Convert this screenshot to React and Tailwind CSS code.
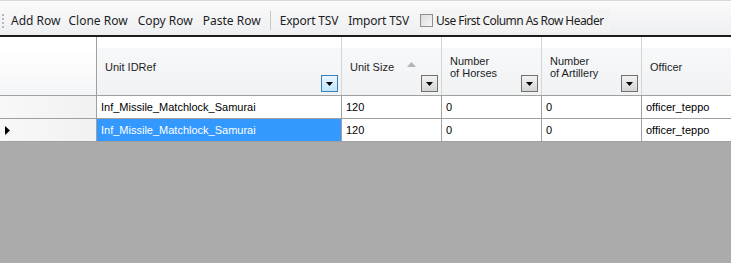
import React from "react";

const cols = [
  { key: "id", label: ["Unit IDRef"], w: "w-[245px]", active: true },
  { key: "size", label: ["Unit Size"], w: "w-[100px]", sort: true },
  { key: "horses", label: ["Number", "of Horses"], w: "w-[100px]" },
  { key: "art", label: ["Number", "of Artillery"], w: "w-[100px]" },
  { key: "officer", label: ["Officer"], w: "w-[120px]" },
];

const rows = [
  ["Inf_Missile_Matchlock_Samurai", "120", "0", "0", "officer_teppo"],
  ["Inf_Missile_Matchlock_Samurai", "120", "0", "0", "officer_teppo"],
];

function DropButton({ active }) {
  return (
    <div
      className={
        "absolute top-[38px] right-[3px] w-[17px] h-[17px] flex items-center justify-center border " +
        (active
          ? "border-[#3c7fb1] bg-gradient-to-b from-[#eaf6fd] to-[#bee6fd]"
          : "border-[#707070] bg-gradient-to-b from-[#f2f2f2] to-[#d5d5d5]")
      }
    >
      <svg width="7" height="4" viewBox="0 0 7 4">
        <path d="M0 0h7L3.5 4z" fill="#000" />
      </svg>
    </div>
  );
}

export default function App() {
  return (
    <div className="w-[731px] h-[263px] overflow-hidden bg-[#ababab] text-[11px] font-['Liberation_Sans',Arial,sans-serif]">
      {/* Toolbar */}
      <div className="h-[37px] bg-gradient-to-b from-[#fafafa] to-[#eeeff2] border-t border-[#d8d8d8] border-b-2 border-b-[#1c1c1c] flex items-center pt-[5px] pl-[2px] font-['Noto_Sans','Open_Sans',sans-serif] text-[12px] text-[#1e1e1e]">
        <div className="flex flex-col gap-[2px] mr-[4px]">
          {[0, 1, 2, 3].map((i) => (
            <div key={i} className="w-[2px] h-[2px] bg-[#b8b8b8]" />
          ))}
        </div>
        <span className="px-[3px]">Add Row</span>
        <span className="px-[5px]">Clone Row</span>
        <span className="px-[5px]">Copy Row</span>
        <span className="px-[5px]">Paste Row</span>
        <div className="w-px h-[19px] bg-[#c8c8c8] mx-[4px]" />
        <span className="px-[5px] tracking-[-0.2px]">Export TSV</span>
        <span className="px-[5px] tracking-[-0.2px]">Import TSV</span>
        <div className="flex items-center ml-[6px] pr-[6px] h-[22px] bg-[#f3f3f3]">
          <div className="w-[13px] h-[13px] border border-[#8e8f8f] bg-gradient-to-br from-[#dcdcdc] to-[#f6f6f6] mr-[3px]" />
          <span className="tracking-[-0.55px]">Use First Column As Row Header</span>
        </div>
      </div>

      {/* Grid */}
      <div className="bg-white">
        <div className="flex h-[59px] border-b border-[#a0a0a0] bg-white">
          <div className="w-[97px] shrink-0 border-r border-[#a0a0a0] bg-gradient-to-b from-white from-20% to-[#f4f5f7]" />
          {cols.map((c) => (
            <div
              key={c.key}
              className={
                c.w +
                " shrink-0 relative border-r border-[#d5d5d5] bg-gradient-to-b from-white from-18% via-[#f7f8fa] via-20% to-[#f1f2f4] text-[#1e1e1e]"
              }
            >
              <div className={"absolute left-[8px] leading-[12px] " + (c.label.length > 1 ? "top-[18px]" : "top-[24px]")}>
                {c.label.map((l) => (
                  <div key={l}>{l}</div>
                ))}
              </div>
              {c.sort && (
                <svg className="absolute left-[65px] top-[25px]" width="9" height="5" viewBox="0 0 9 5">
                  <path d="M0 5L4.5 0 9 5z" fill="#b4b4b4" />
                </svg>
              )}
              <DropButton active={c.active} />
            </div>
          ))}
        </div>
        {rows.map((r, ri) => (
          <div key={ri} className="flex h-[23px] border-b border-[#a0a0a0]">
            <div className="w-[97px] shrink-0 border-r border-[#a0a0a0] bg-gradient-to-r from-[#f8f8f8] to-[#f1f1f1] flex items-center pl-[5px]">
              {ri === 1 && (
                <svg width="5" height="9" viewBox="0 0 5 9">
                  <path d="M0 0L5 4.5 0 9z" fill="#000" />
                </svg>
              )}
            </div>
            {r.map((v, ci) => {
              const sel = ri === 1 && ci === 0;
              return (
                <div
                  key={ci}
                  className={
                    cols[ci].w +
                    " shrink-0 flex items-center pl-[4px] border-r border-[#a0a0a0] " +
                    (sel ? "bg-[#3399ff] text-white" : "bg-white text-black")
                  }
                >
                  {v}
                </div>
              );
            })}
          </div>
        ))}
      </div>
    </div>
  );
}
